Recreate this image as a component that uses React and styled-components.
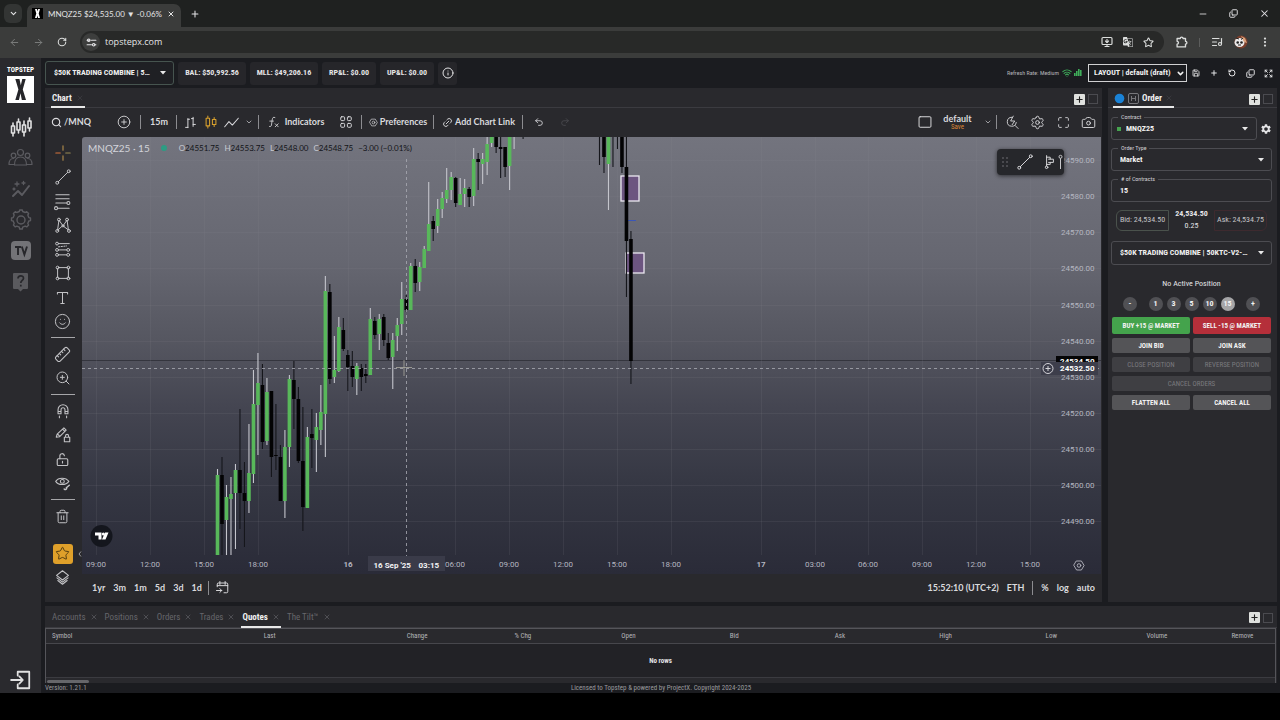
import React from "react";
import styled, { createGlobalStyle, css } from "styled-components";
import {
  ArrowLeft, ArrowRight, ChevronDown, EllipsisVertical, Info, ListMusic,
  Minus, MonitorDown, Plus, RotateCw, Star, X, Settings, Search,
  Camera, Maximize, Undo2, Redo2, Save, Expand, Trash2, Ruler, Smile,
  RotateCcw, Copy, Wifi, ZoomIn, Link2, CirclePlus,
} from "lucide-react";
import { MdSettings, MdOutlineGTranslate } from "react-icons/md";

const narrow = `"Roboto Condensed", "Liberation Sans Narrow", Roboto, sans-serif`;
const human = `Lato, "Open Sans", sans-serif`;

const Global = createGlobalStyle`
  * { box-sizing: border-box; }
  body { margin: 0; background: #000; }
  button, select, input { font: inherit; color: inherit; margin: 0; }
  button { background: none; border: 0; padding: 0; cursor: pointer; }
  svg { display: block; flex: none; }
`;

/* ---------- shell ---------- */
const Screen = styled.div`
  min-height: 100vh;
  display: flex;
  flex-direction: column;
  padding-bottom: 27px;
  background: #000;
  color: #e4e4e6;
  font-family: ${narrow};
  font-size: 8px;
  line-height: 12px;
`;
const Page = styled.div`
  flex: 1;
  display: flex;
  min-height: 0;
  background: #1b1c20;
`;
const Turned = styled.span`
  display: block;
  transform: ${(p) => p.$by};
`;

/* ---------- browser chrome ---------- */
const TabStrip = styled.header`
  height: 27px;
  display: flex;
  align-items: center;
  background: #1f2120;
  padding-left: 4px;
  font-family: ${human};
`;
const TabSearch = styled.button`
  width: 18px;
  height: 19px;
  border-radius: 6px;
  background: #333534;
  display: grid;
  place-items: center;
`;
const BrowserTab = styled.div`
  align-self: flex-end;
  height: 23px;
  width: 154px;
  margin-left: 5px;
  padding: 0 6px 4px 5px;
  border-radius: 7px 7px 0 0;
  background: #3b3c3b;
  display: flex;
  align-items: center;
  gap: 5px;
`;
const Favicon = styled.span`
  width: 11px;
  height: 11px;
  background: #000;
  display: grid;
  place-items: center;
`;
const TabTitle = styled.span`
  flex: 1;
  white-space: nowrap;
`;
const WindowButtons = styled.div`
  margin-left: auto;
  display: flex;
  align-items: center;
`;
const WinButton = styled.button`
  width: ${(p) => p.$w || 31}px;
  height: 26px;
  display: grid;
  place-items: center;
`;
const AddressBar = styled.div`
  height: 31px;
  display: flex;
  align-items: center;
  background: #3b3c3b;
  padding: 0 2px 1px;
  font-family: "Open Sans", sans-serif;
  font-size: 9px;
`;
const NavButton = styled.button`
  width: ${(p) => p.$w || 24}px;
  height: 24px;
  display: grid;
  place-items: center;
  color: ${(p) => (p.$dim ? "#7e807f" : "#dcdedd")};
`;
const ChromeRule = styled.span`
  width: 1px;
  height: 9px;
  margin: 0 4px;
  background: #5c5d5c;
`;
const UrlPill = styled.div`
  flex: 1;
  height: 22px;
  margin: 0 5px 0 6px;
  border-radius: 11px;
  background: #282928;
  display: flex;
  align-items: center;
  padding: 0 5px 0 2px;
`;
const SiteInfo = styled.button`
  width: 18px;
  height: 18px;
  border-radius: 50%;
  background: #3d3e3d;
  display: grid;
  place-items: center;
`;
const UrlInput = styled.input`
  flex: 1;
  min-width: 0;
  background: none;
  border: 0;
  outline: 0;
  padding: 0 5px;
`;

/* ---------- side navigation ---------- */
const SideNav = styled.nav`
  width: 41px;
  background: #2a2a2e;
  display: flex;
  flex-direction: column;
  align-items: center;
  padding: 7px 0 0;
`;
const Brand = styled.div`
  width: 27px;
  height: 46px;
  display: flex;
  flex-direction: column;
  align-items: center;
  font-weight: 700;
  font-size: 7px;
  line-height: 11px;
  color: #fff;
`;
const SideButton = styled.button`
  width: 41px;
  height: ${(p) => (p.$last ? 27 : 31)}px;
  display: grid;
  place-items: center;
  color: ${(p) => (p.$on ? "#e2e2e2" : "#5b5b60")};
  margin-top: ${(p) => (p.$last ? "auto" : "0")};
`;

/* ---------- workspace ---------- */
const Workspace = styled.main`
  flex: 1;
  min-width: 0;
  display: flex;
  flex-direction: column;
  padding: 0 3px 0 4px;
`;
const TopBar = styled.div`
  height: 30px;
  display: flex;
  align-items: center;
  gap: 4px;
`;
const Stat = styled.div`
  height: 23px;
  min-width: ${(p) => p.$w}px;
  display: grid;
  place-items: center;
  border-radius: 3px;
  background: #26262a;
  font-weight: 700;
  white-space: nowrap;
`;
const InfoButton = styled.button`
  width: 19px;
  height: 23px;
  border-radius: 3px;
  background: #26262a;
  display: grid;
  place-items: center;
`;
const SelectBox = styled.label`
  position: relative;
  display: flex;
  align-items: center;
  height: ${(p) => p.$h || 24}px;
  width: ${(p) => p.$w || "auto"};
  flex: ${(p) => (p.$grow ? 1 : "none")};
  border: 1px solid ${(p) => p.$line || "#4c4c51"};
  border-radius: ${(p) => (p.$square ? 0 : 3)}px;
  background: ${(p) => p.$bg || "transparent"};
  color: #f0f0f0;
`;
const NativeSelect = styled.select`
  appearance: none;
  width: 100%;
  height: 100%;
  border: 0;
  outline: 0;
  background: transparent;
  padding: 0 10px 0 ${(p) => p.$pad || 8}px;
  font-weight: 700;
  text-overflow: ellipsis;
  option { color: #000; }
`;
const Arrow = styled.svg`
  position: absolute;
  right: ${(p) => p.$r || 6}px;
  pointer-events: none;
`;
const TopTools = styled.div`
  margin-left: auto;
  display: flex;
  align-items: center;
`;
const RefreshRate = styled.span`
  font-size: 6px;
  color: #b5b5b8;
  margin-right: 3px;
  white-space: nowrap;
`;
const Signals = styled.span`
  display: flex;
  gap: 2px;
  margin-right: 6px;
  color: #3fae5a;
`;
const TopIcon = styled.button`
  width: 18px;
  height: 22px;
  display: grid;
  place-items: center;
`;
const Middle = styled.div`
  flex: 1;
  min-height: 0;
  display: flex;
  gap: 6px;
`;
const Panel = styled.section`
  background: #29292d;
  display: flex;
  flex-direction: column;
  min-width: 0;
  min-height: 0;
  flex: ${(p) => (p.$grow ? "1 1 0" : "none")};
  width: ${(p) => p.$w || "auto"};
`;
const TabRow = styled.div`
  height: ${(p) => p.$h || 20}px;
  flex: none;
  display: flex;
  align-items: stretch;
  padding: 0 4px 0 ${(p) => p.$pad || 6}px;
  gap: 5px;
  border-bottom: 1px solid #3b3b40;
`;
const PanelTab = styled.button`
  display: flex;
  align-items: center;
  gap: ${(p) => p.$gap || 4}px;
  padding: 2px 1px 0;
  font-size: 9px;
  font-weight: ${(p) => (p.$on ? 700 : 400)};
  color: ${(p) => (p.$on ? "#f0f0f0" : "#66666b")};
  border-bottom: 2px solid ${(p) => (p.$on ? "#e8e8e8" : "transparent")};
  margin-bottom: -1px;
  white-space: nowrap;
`;
const TabTools = styled.div`
  margin-left: auto;
  padding-top: 3px;
  display: flex;
  align-items: center;
  gap: 3px;
`;
const AddPanel = styled.button`
  width: 11px;
  height: 11px;
  border-radius: 1px;
  background: #dfe1de;
  color: #222;
  display: grid;
  place-items: center;
`;
const PinPanel = styled.button`
  width: 10px;
  height: 10px;
  border: 1px solid #4b4b50;
`;

/* ---------- chart ---------- */
const ChartToolbar = styled.div`
  height: 29px;
  flex: none;
  display: flex;
  align-items: center;
  font-family: ${human};
  font-weight: 700;
  font-size: 9px;
  color: #dadadd;
  padding: 0 1px 1px 0;
`;
const ToolCell = styled.button`
  width: ${(p) => p.$w}px;
  height: 26px;
  display: flex;
  align-items: center;
  justify-content: ${(p) => (p.$start ? "flex-start" : "center")};
  padding-left: ${(p) => (p.$start ? 6 : 0)}px;
  gap: ${(p) => p.$gap || 2}px;
  white-space: nowrap;
  color: ${(p) => p.$color || "#dadadd"};
`;
const Divider = styled.span`
  width: 1px;
  height: 14px;
  margin: 0 2px 0 1px;
  background: #8c8c90;
`;
const Spacer = styled.span`
  flex: 1;
`;
const LayoutName = styled.span`
  display: flex;
  flex-direction: column;
  align-items: center;
  line-height: 9px;
  small {
    font-family: ${narrow};
    font-size: 7px;
    line-height: 8px;
    font-weight: 400;
    color: #d98736;
  }
`;
const ChartBody = styled.div`
  flex: 1;
  min-height: 0;
  display: flex;
`;
const DrawBar = styled.div`
  width: 37px;
  display: flex;
  flex-direction: column;
  align-items: center;
  padding: 4px 2px 12px 0;
  color: #c3c3c6;
`;
const DrawTool = styled.button`
  width: 35px;
  height: 24px;
  display: grid;
  place-items: center;
`;
const DrawRule = styled.span`
  width: 24px;
  height: 1px;
  margin: 4px 0;
  background: #a6a6a9;
`;
const FavoriteRow = styled.div`
  width: 35px;
  margin: auto 0 2px;
  display: grid;
  place-items: center;
  position: relative;
`;
const FavoriteTool = styled.button`
  width: 20px;
  height: 20px;
  border-radius: 3px;
  background: #dfa02a;
  color: #4c3710;
  display: grid;
  place-items: center;
`;
const CollapseHandle = styled.button`
  position: absolute;
  right: -2px;
  top: 7px;
  color: #9a9a9e;
`;
const ChartColumn = styled.div`
  flex: 1;
  min-width: 0;
  display: flex;
  flex-direction: column;
`;
const Plot = styled.div`
  position: relative;
  flex: 1;
  min-height: 436px;
  margin-right: 1px;
  border-radius: 3px 0 0 0;
  background: linear-gradient(#73747e 0%, #666771 28%, #555660 47%, #444551 62%, #353743 80%, #2a2b38 100%);
  overflow: hidden;
`;
const PlotSvg = styled.svg`
  position: absolute;
  inset: 0;
  width: 100%;
  height: 100%;
  font-family: Roboto, sans-serif;
`;
const Legend = styled.div`
  position: absolute;
  left: 6px;
  top: 5px;
  display: flex;
  align-items: center;
  font-family: ${human};
  font-size: 8px;
  color: #121318;
  gap: 5px;
  b { color: #c9cad2; font-weight: 400; }
`;
const LegendSymbol = styled.span`
  font-size: 10px;
  color: #d2d3da;
  margin-right: 6px;
`;
const LiveDot = styled.span`
  width: 6px;
  height: 6px;
  border-radius: 50%;
  background: #2d9c83;
  margin-right: 7px;
`;
const FloatingTools = styled.div`
  position: absolute;
  right: 37px;
  top: 12px;
  width: 67px;
  height: 26px;
  border-radius: 4px;
  background: #26272b;
  box-shadow: 0 1px 4px rgba(0, 0, 0, 0.6);
  color: #c8c8cb;
  display: flex;
  align-items: center;
  padding-left: 5px;
  gap: 3px;
`;
const RangeBar = styled.div`
  height: 28px;
  flex: none;
  display: flex;
  align-items: center;
  padding: 0 7px 0 10px;
  gap: 8px;
  font-family: ${human};
  font-weight: 700;
  font-size: 9px;
  color: #dadadd;
  ${Divider} { margin: 0; }
  ${Divider}:first-of-type { margin: 0 -2px; }
`;

/* ---------- order ticket ---------- */
const Ticket = styled.form`
  display: flex;
  flex-direction: column;
  padding: 9px 5px 0 3px;
`;
const FieldRow = styled.div`
  display: flex;
  align-items: center;
  gap: 3px;
  margin-bottom: ${(p) => (p.$last ? 5 : 8)}px;
`;
const FieldLabel = styled.span`
  position: absolute;
  left: 6px;
  top: -6px;
  padding: 0 3px;
  background: #29292d;
  font-size: 6px;
  line-height: 9px;
  color: #d0d0d3;
`;
const Square = styled.span`
  position: absolute;
  left: 5px;
  width: 4px;
  height: 4px;
  background: #46a34f;
`;
const QtyInput = styled.input`
  width: 100%;
  height: 100%;
  border: 0;
  outline: 0;
  background: transparent;
  padding: 0 8px;
  font-weight: 700;
`;
const Prices = styled.div`
  display: flex;
  justify-content: space-between;
  align-items: center;
  height: 26px;
  margin: 0 5px 8px;
  text-align: center;
`;
const PriceBox = styled.div`
  width: 53px;
  height: 21px;
  border: 1px solid ${(p) => (p.$ask ? "#3e2a2f" : "#4a524c")};
  border-radius: ${(p) => (p.$ask ? "0 6px 6px 0" : "6px 0 0 6px")};
  display: grid;
  place-items: center;
  white-space: nowrap;
  color: #c4c4c7;
`;
const Position = styled.p`
  margin: 13px 0 7px;
  text-align: center;
`;
const Sizes = styled.div`
  display: flex;
  align-items: center;
  justify-content: space-between;
  padding: 0 12px;
  margin-bottom: 6px;
`;
const SizeGroup = styled.div`
  display: flex;
  gap: 4px;
`;
const SizeButton = styled.button`
  width: 14px;
  height: 14px;
  border-radius: 50%;
  background: ${(p) => (p.$on ? "#a5a5a7" : "#505054")};
  color: #f2f2f2;
  font-weight: 700;
  line-height: 14px;
`;
const ButtonGrid = styled.div`
  display: grid;
  grid-template-columns: 1fr 1fr;
  gap: 4px 3px;
  padding: 0 1px;
`;
const OrderButton = styled.button`
  height: 15px;
  border-radius: 2px;
  background: #545457;
  color: #f2f2f2;
  font-size: 7px;
  font-weight: 700;
  white-space: nowrap;
  ${(p) => p.$wide && css`grid-column: 1 / -1;`}
  ${(p) => p.$side && css`height: 17px; background: ${p.$side === "buy" ? "#44a34c" : "#b52f3a"};`}
  &:disabled { background: #3f3f43; color: #7a7a7e; font-weight: 400; }
`;

/* ---------- quotes ---------- */
const Bottom = styled(Panel)`
  margin-top: 4px;
`;
const TableBox = styled.div`
  border: 1px solid #55555a;
  border-bottom: 0;
  margin-right: 1px;
`;
const QuoteTable = styled.table`
  width: 100%;
  table-layout: fixed;
  border-collapse: collapse;
  font-size: 7px;
  th {
    height: 15px;
    padding: 0;
    font-weight: 400;
    color: #b4b4b8;
    border-bottom: 1px solid #47474c;
    text-align: center;
  }
  th:first-child { text-align: left; padding-left: 6px; }
  td {
    height: 34px;
    padding: 0;
    text-align: center;
    font-weight: 700;
    background: #222226;
    border-bottom: 1px solid #3b3b40;
  }
`;
const ScrollTrack = styled.div`
  height: 5px;
  padding: 2px 0 0 1px;
`;
const ScrollThumb = styled.div`
  width: 42px;
  height: 3px;
  border-radius: 2px;
  background: #66666a;
`;
const Footer = styled.footer`
  height: 10px;
  display: grid;
  grid-template-columns: 1fr auto 1fr;
  align-items: center;
  font-size: 7px;
  line-height: 10px;
  color: #9a9a9e;
`;

/* ---------- small drawings ---------- */
const Caret = ({ r }) => (
  <Arrow $r={r} width="6" height="4" viewBox="0 0 6 4"><path d="M0 0h6L3 3.4z" fill="#e8e8e8" /></Arrow>
);
const Glyph = ({ s = 16, w = 1.1, children, v = 20 }) => (
  <svg width={s} height={s} viewBox={`0 0 ${v} ${v}`} fill="none" stroke="currentColor" strokeWidth={w} strokeLinecap="round" strokeLinejoin="round">{children}</svg>
);
const Dot = ({ x, y, r = 1.6 }) => <circle cx={x} cy={y} r={r} />;

const CrossIcon = () => (
  <Glyph s={18} w={1.2}>
    <path d="M10 2v5M10 13v5" stroke="#b7914c" /><path d="M2 10h5" stroke="#d8743c" /><path d="M13 10h5" stroke="#9a8c55" />
  </Glyph>
);
const TrendIcon = () => <Glyph s={18}><Dot x={3.6} y={16.4} /><Dot x={16.4} y={3.6} /><path d="M4.8 15.2L15.2 4.8" /></Glyph>;
const FibIcon = () => (
  <Glyph s={19}><path d="M3 3h14M3 7h14M3 11.5h11.6M5 17h12" /><Dot x={16.2} y={11.5} /><Dot x={3.2} y={17} /></Glyph>
);
const PatternIcon = () => (
  <Glyph s={18}><path d="M4 15.5L5.5 4.5L10 11L14.5 4.5L16 15.5L10 11z" /><Dot x={5.5} y={4} /><Dot x={14.5} y={4} /><Dot x={3.6} y={16.6} /><Dot x={16.6} y={16.6} /><Dot x={10} y={11} r={1.2} /></Glyph>
);
const ForecastIcon = () => (
  <Glyph s={18}><path d="M5 4h12M5 11h9M5 16.5h9" /><path d="M5 7.6l9-1" strokeDasharray="1.4 1.6" /><Dot x={3.4} y={4} /><Dot x={3.4} y={11} /><Dot x={3.4} y={16.5} /><Dot x={15.8} y={11} /><Dot x={15.8} y={16.5} /></Glyph>
);
const RectIcon = () => (
  <Glyph s={18}><path d="M5 4h10M5 16h10M4 5v10M16 5v10" /><Dot x={4} y={4} /><Dot x={16} y={4} /><Dot x={4} y={16} /><Dot x={16} y={16} /></Glyph>
);
const TextIcon = () => <Glyph s={17} w={1.2}><path d="M4 6V4h12v2M10 4v13M8 17h4" /></Glyph>;
const BarsIcon = () => <Glyph s={13} w={1.5}><path d="M6 4v14M2.500 17.500H6M6 5h2.500M14 2v14M11.500 4H14M14 13h3.500" /></Glyph>;
const CandlesIcon = () => <Glyph s={14} w={1.5}><path d="M5.500 1.500v3M5.500 15.500v3M3 4.500h5v11H3zM14.500 3.500v3M14.500 13.500v3M12 6.500h5v7h-5z" /></Glyph>;
const LineIcon = () => <Glyph s={17} w={1.2}><path d="M2 15l5-6 4 4 7-8" /></Glyph>;
const FxIcon = () => <Glyph s={12} w={1.4}><path d="M11.500 2.500c-3-1.500-4 .500-4.500 4L5.800 15c-.4 2.500-1.800 3-3.300 2.500M3 8.500h6M12 13l5 5M17 13l-5 5" /></Glyph>;
const GridIcon = () => (
  <Glyph s={14} w={1.4}><rect x="2.500" y="2.500" width="5.500" height="5.500" rx="1.300" /><rect x="12" y="2.500" width="5.500" height="5.500" rx="1.300" /><rect x="2.500" y="12" width="5.500" height="5.500" rx="1.300" /><rect x="12" y="12" width="5.500" height="5.500" rx="1.300" /></Glyph>
);
const QuickSearchIcon = () => (
  <Glyph s={15} w={1.2}><path d="M9 3a6 6 0 1 0 6 7M13.500 14l4 4M11 1.500L7.500 8H13L9.500 13" /></Glyph>
);
const HexIcon = ({ s = 12 }) => <Glyph s={s} w={1.5}><path d="M6 2.500h8l4.500 7.500-4.500 7.500H6L1.500 10z" /><circle cx="10" cy="10" r="3" /></Glyph>;
const GotoIcon = () => <Glyph s={15} w={1.3}><path d="M3 9V5.500A1.500 1.500 0 0 1 4.500 4h11A1.500 1.500 0 0 1 17 5.500v10a1.500 1.500 0 0 1-1.500 1.500H12M3 7.500h14M6.500 2v4M13.500 2v4M2 14h7M6.500 11.500L9 14l-2.500 2.500" /></Glyph>;
const FlagIcon = () => <Glyph s={16} w={1.2}><path d="M7 2v13M7 4h4.500v2.500h4v4h-4V13H7M9.500 6.500h2M9.500 10.500h2" /><Dot x={7} y={16.6} /></Glyph>;
const PinLineIcon = () => <svg width="5" height="16" viewBox="0 0 5 16" fill="none" stroke="currentColor"><circle cx="2.500" cy="2.800" r="1.500" /><path d="M2.500 4.300V15" /></svg>;
const TuneIcon = () => <Glyph s={11} w={2}><path d="M2 6h5M15 14h3" /><circle cx="5" cy="6" r="2.300" /><path d="M10 6h8M2 14h8" /><circle cx="14" cy="14" r="2.300" /></Glyph>;

const SideCandles = () => (
  <Glyph s={22} w={1.6} v={22}><path d="M3 7v3M3 17v3M1.500 10h3v7h-3zM8.500 3v3M8.500 14v3M7 6h3v8H7zM14 5v4M14 16v4M12.500 9h3v7h-3zM19.500 2v3M19.500 12v3M18 5h3v7h-3z" /></Glyph>
);
const PeopleIcon = () => (
  <Glyph s={25} w={1.2} v={25}><circle cx="12.500" cy="7.500" r="3" /><circle cx="5.500" cy="10.500" r="2.300" /><circle cx="19.500" cy="10.500" r="2.300" /><path d="M6.500 20c0-5 2-8 6-8s6 3 6 8zM1 19.500c0-4 1.500-6 4.500-6M24 19.500c0-4-1.500-6-4.500-6M1 19.500h5M19 19.500h5" /></Glyph>
);
const SparkIcon = () => (
  <Glyph s={20} w={2}><path d="M2 17l5-5 4 4 7-9" /><path d="M4 5h4M6 3v4M11 4h3M12.500 2.500v3M2 10h2M3 9v2" strokeWidth="1.300" /></Glyph>
);
const ExitIcon = () => <Glyph s={22} w={1.6}><path d="M7 6V2.500h10.500v15H7V14M1 10h10.500M8.500 6.800L11.700 10l-3.200 3.200" /></Glyph>;

/* ---------- market data: [slot, high, body top, body bottom, low, up?] in canvas pixels ---------- */
const CANDLES = [
  [0, 469, 475, 555, 555, 1], [1, 457, 475, 524, 555, 0], [2, 485, 497, 520, 555, 1], [3, 477, 494, 499, 555, 1],
  [4, 464, 470, 493, 549, 1], [5, 409, 470, 493, 529, 0], [6, 462, 493, 501, 547, 0], [7, 424, 473, 501, 513, 1],
  [8, 370, 404, 474, 483, 1], [9, 353, 383, 405, 455, 1], [10, 364, 385, 442, 449, 0], [11, 378, 392, 441, 445, 1],
  [12, 391, 391, 457, 477, 0], [13, 404, 455, 456, 470, 0], [14, 445, 457, 501, 501, 0], [15, 430, 447, 501, 518, 1],
  [16, 375, 379, 447, 467, 1], [17, 361, 380, 399, 429, 0], [18, 387, 399, 461, 463, 0], [19, 407, 461, 507, 531, 0],
  [20, 427, 437, 508, 508, 1], [21, 409, 434, 438, 468, 0], [22, 413, 427, 440, 472, 1], [23, 385, 412, 430, 445, 1],
  [24, 276, 291, 414, 457, 1], [25, 284, 292, 379, 384, 0], [26, 336, 370, 377, 383, 1], [27, 317, 327, 371, 372, 1],
  [28, 318, 330, 349, 351, 0], [29, 350, 355, 367, 391, 0], [30, 351, 366, 377, 387, 0], [31, 363, 366, 379, 395, 1],
  [32, 364, 368, 377, 391, 0], [33, 364, 374, 376, 383, 0], [34, 308, 319, 375, 375, 1], [35, 317, 321, 335, 339, 0],
  [36, 314, 319, 334, 350, 1], [37, 314, 317, 340, 346, 0], [38, 333, 343, 358, 360, 0], [39, 333, 340, 357, 389, 1],
  [40, 318, 325, 336, 351, 1], [41, 282, 299, 324, 335, 1], [42, 295, 299, 310, 312, 0], [43, 263, 266, 310, 310, 1],
  [44, 259, 266, 283, 292, 0], [45, 262, 267, 282, 291, 1], [46, 246, 249, 268, 268, 1], [47, 182, 224, 251, 251, 1],
  [48, 216, 221, 229, 241, 0], [49, 199, 209, 226, 233, 1], [50, 192, 198, 209, 218, 1], [51, 168, 190, 199, 203, 1],
  [52, 172, 177, 190, 200, 1], [53, 177, 178, 203, 207, 0], [54, 178, 194, 205, 205, 1], [55, 179, 188, 194, 207, 1],
  [56, 187, 189, 197, 207, 0], [57, 148, 159, 196, 206, 1], [58, 153, 159, 162, 190, 0], [59, 153, 159, 164, 184, 1],
  [60, 137, 144, 162, 175, 1], [61, 137, 137, 143, 147, 1], [62, 137, 137, 147, 153, 0], [63, 137, 147, 149, 178, 0],
  [64, 147, 147, 167, 177, 0], [65, 137, 137, 166, 190, 1], [66, 137, 137, 137, 149, 1], [68, 137, 137, 137, 139, 0],
  [85, 137, 137, 137, 165, 0], [86, 137, 137, 157, 173, 0], [87, 137, 137, 164, 210, 1], [88, 137, 137, 137, 167, 0],
  [89, 137, 137, 137, 149, 0], [90, 137, 137, 167, 173, 0], [91, 137, 167, 241, 297, 0], [92, 231, 239, 361, 384, 0],
];
const slotX = (i) => 217.5 + i * 4.494;
const PRICES = [[160, "24590.00"], [196, "24580.00"], [232, "24570.00"], [268, "24560.00"], [305, "24550.00"], [341, "24540.00"], [377, "24530.00"], [413, "24520.00"], [449, "24510.00"], [485, "24500.00"], [521, "24490.00"]];
const TIMES = [[96, "09:00"], [150, "12:00"], [204, "15:00"], [258, "18:00"], [348, "16"], [455, "06:00"], [509, "09:00"], [563, "12:00"], [617, "15:00"], [671, "18:00"], [761, "17"], [815, "03:00"], [868, "06:00"], [922, "09:00"], [976, "12:00"], [1030, "15:00"]];

const Chart = () => (
  <Plot>
    <PlotSvg role="img" aria-label="MNQZ25 15 minute candles">
      {PRICES.map(([y]) => <line key={y} x1="0" x2="100%" y1={y - 136.5} y2={y - 136.5} stroke="#8a8b96" strokeOpacity="0.13" />)}
      <line x1="0" x2="100%" y1="223.500" y2="223.500" stroke="#22232a" strokeOpacity="0.6" />
      <g transform="translate(-82 -137)">
        {TIMES.map(([x]) => <line key={x} x1={x + 0.5} x2={x + 0.5} y1="137" y2="555" stroke="#8a8b96" strokeOpacity="0.13" />)}
        {[[621, 176, 18, 25], [626, 253, 18, 20]].map(([x, y, w, h]) => (
          <rect key={y} x={x} y={y} width={w} height={h} fill="#6c5580" stroke="#ece8f0" strokeWidth="1.300" />
        ))}
        <path d="M628 220.500h8" stroke="#3b56b8" />
        {CANDLES.map(([i, hi, top, bot, lo, up]) => (
          <g key={i}>
            <line x1={slotX(i)} x2={slotX(i)} y1={hi} y2={lo} stroke={up ? "#c4c5cc" : "#15161b"} strokeWidth="1.100" />
            {bot > top && <rect x={slotX(i) - 1.8} y={top} width="3.600" height={bot - top} fill={up ? "#58b85a" : "#030304"} />}
          </g>
        ))}
        <line x1="406.500" x2="406.500" y1="159" y2="557" stroke="#a9aab3" strokeDasharray="3 3" strokeOpacity="0.8" />
        <path d="M404 360v16M396 367.500h16" stroke="#aaa99f" strokeOpacity="0.8" />
      </g>
      <line x1="0" x2="100%" y1="231.500" y2="231.500" stroke="#a9aab3" strokeDasharray="3 3" strokeOpacity="0.8" />
      <g transform="translate(-82 -137)" fontSize="8">
        <rect x="368" y="556" width="77" height="15" fill="#3a3b49" />
        <g textAnchor="middle" fill="#b5b6c0">
          {TIMES.map(([x, t]) => <text key={x} x={x} y="567" fontWeight={t.length === 2 ? 700 : 400}>{t}</text>)}
        </g>
        <text x="373.500" y="568" fontWeight="700" fill="#f2f2f4">16 Sep '25</text>
        <text x="418.500" y="568" fontWeight="700" fill="#f2f2f4">03:15</text>
        <circle cx="101.500" cy="536" r="11" fill="#14161d" />
        <path d="M95 532.500h6.500v7h-3v-4H95zM108.500 532.500l-3 7H102l3-7z" fill="#fff" /><circle cx="103.300" cy="534" r="1.500" fill="#fff" />
      </g>
      <svg x="100%" overflow="visible" fontSize="8">
        <g transform="translate(-1101 -137)">
          <g textAnchor="end" fill="#b5b6c0">{PRICES.map(([y, t]) => <text key={y} x="1094.500" y={y + 3}>{t}</text>)}</g>
          <rect x="1056" y="356" width="42" height="10" fill="#050506" />
          <text x="1094.500" y="364" textAnchor="end" fontWeight="700" fill="#fff">24534.50</text>
          <rect x="1041" y="362" width="57" height="13" fill="#3d3e4b" />
          <text x="1094.500" y="371" textAnchor="end" fontWeight="700" fill="#fff">24532.50</text>
          <circle cx="1048" cy="368.500" r="5" fill="none" stroke="#d4d4d8" /><path d="M1045.500 368.500h5M1048 366v5" stroke="#d4d4d8" />
          <g transform="translate(1073 559.500)" color="#b5b6c0"><HexIcon /></g>
        </g>
      </svg>
    </PlotSvg>
    <Legend>
      <LegendSymbol>MNQZ25 · 15</LegendSymbol>
      <LiveDot />
      <span><b>O</b>24551.75</span><span><b>H</b>24553.75</span><span><b>L</b>24548.00</span><span><b>C</b>24548.75</span><span>−3.00 (−0.01%)</span>
    </Legend>
    <FloatingTools>
      <svg width="6" height="10" viewBox="0 0 6 10" fill="#77777b">{[1, 5, 9].map((y) => [1, 5].map((x) => <circle key={x + "-" + y} cx={x} cy={y} r="0.800" />))}</svg>
      <ToolCell type="button" aria-label="Trend line" $w={28}><TrendIcon /></ToolCell>
      <ToolCell type="button" aria-label="Volume profile" $w={13}><FlagIcon /></ToolCell>
      <PinLineIcon />
    </FloatingTools>
  </Plot>
);

const PanelTools = () => (
  <TabTools>
    <AddPanel aria-label="Add tab"><Plus size={9} strokeWidth={3} /></AddPanel>
    <PinPanel aria-label="Maximize" />
  </TabTools>
);
const Close = ({ dim }) => <X size={8} color={dim ? "#3e3e43" : "#5c5c61"} strokeWidth={2.2} />;

const COLS = [["Symbol", "10.5%"], ["Last", "15.4%"], ["Change", "8.6%"], ["% Chg", "8.6%"], ["Open", "8.6%"], ["Bid", "8.6%"], ["Ask", "8.6%"], ["High", "8.6%"], ["Low", "8.6%"], ["Volume", "8.6%"], ["Remove", "5.3%"]];

export default function App() {
  return (
    <Screen>
      <Global />
      <TabStrip>
        <TabSearch aria-label="Search tabs"><ChevronDown size={9} strokeWidth={3} /></TabSearch>
        <BrowserTab>
          <Favicon><svg width="5" height="9" viewBox="0 0 5 9"><path d="M0 0h2l.6 2.600L3.200 0H5L3.700 4.500 5 9H3l-.5-2.600L1.800 9H0l1.300-4.500z" fill="#fff" /></svg></Favicon>
          <TabTitle>MNQZ25 $24,535.00 ▼ -0.06%</TabTitle>
          <X size={8} strokeWidth={3} />
        </BrowserTab>
        <WinButton aria-label="New tab" $w={27}><Plus size={10} strokeWidth={2.5} /></WinButton>
        <WindowButtons>
          <WinButton aria-label="Minimize"><Minus size={10} /></WinButton>
          <WinButton aria-label="Restore"><Turned $by="scaleY(-1)"><Copy size={9} strokeWidth={2.5} /></Turned></WinButton>
          <WinButton aria-label="Close"><X size={11} strokeWidth={2.2} /></WinButton>
        </WindowButtons>
      </TabStrip>
      <AddressBar>
        <NavButton $dim aria-label="Back"><ArrowLeft size={11} /></NavButton>
        <NavButton $dim aria-label="Forward"><ArrowRight size={11} /></NavButton>
        <NavButton aria-label="Reload"><RotateCw size={10} strokeWidth={2.5} /></NavButton>
        <UrlPill>
          <SiteInfo aria-label="Site information"><TuneIcon /></SiteInfo>
          <UrlInput aria-label="Address" defaultValue="topstepx.com" />
          <NavButton aria-label="Install" $w={21}><MonitorDown size={12} strokeWidth={2.3} /></NavButton>
          <NavButton aria-label="Translate" $w={21}><MdOutlineGTranslate size={12} /></NavButton>
          <NavButton aria-label="Bookmark" $w={21}><Star size={11} strokeWidth={2.3} /></NavButton>
        </UrlPill>
        <NavButton aria-label="Extensions" $w={26}>
          <Glyph s={14} w={1.9}><path d="M3 5h4.500a2 2 0 0 1 4 0H15v4a2 2 0 0 1 0 4v4H3v-4a2 2 0 0 0 0-4z" /></Glyph>
        </NavButton>
        <ChromeRule />
        <NavButton aria-label="Media" $w={26}><ListMusic size={12} strokeWidth={2.3} /></NavButton>
        <NavButton aria-label="Profile" $w={22}>
          <svg width="14" height="14" viewBox="0 0 14 14"><circle cx="7" cy="7" r="6.500" fill="#7a3f2c" /><ellipse cx="5.500" cy="7.500" rx="5" ry="4.500" fill="#eceaea" /><path d="M7 1l4 2 2 5-3-1z" fill="#d9a27c" /><circle cx="3.700" cy="7.500" r="1.300" fill="#222" /><circle cx="7.500" cy="7.500" r="1.300" fill="#222" /><path d="M2 3l3 1M9 3L7 4.500M4 10h3" stroke="#222" /></svg>
        </NavButton>
        <NavButton aria-label="Menu" $w={26}><EllipsisVertical size={12} strokeWidth={2.5} /></NavButton>
      </AddressBar>

      <Page>
        <SideNav aria-label="Main">
          <Brand>
            <span>TOPSTEP</span>
            <svg width="27" height="27" viewBox="0 0 26 26"><path fill="#fff" d="M0 0h26v26H0z" /><path d="M8 3h4l1.300 6L14.700 3H18l-2.800 10L18.300 23h-4L13 16.500 11.500 23H8l3-10z" fill="#26262a" /></svg>
          </Brand>
          <SideButton $on aria-label="Trade"><SideCandles /></SideButton>
          <SideButton aria-label="Community"><PeopleIcon /></SideButton>
          <SideButton aria-label="Stats"><SparkIcon /></SideButton>
          <SideButton aria-label="Settings">
            <Glyph s={22} w={1.4} v={22}>
              <circle cx="11" cy="11" r="4" />
              <path d="M9.300 2.500l.4-1.500h2.600l.4 1.500 2.500 1 1.500-.8 1.900 1.900-.8 1.500 1 2.500 1.700.4v2.600l-1.700.4-1 2.500.8 1.500-1.900 1.900-1.500-.8-2.500 1-.4 1.900H9.700l-.4-1.900-2.500-1-1.500.8-1.900-1.900.8-1.500-1-2.500-1.700-.4V9l1.700-.4 1-2.500-.8-1.500 1.900-1.900 1.500.8z" />
            </Glyph>
          </SideButton>
          <SideButton aria-label="TradingView">
            <svg width="20" height="19" viewBox="0 0 20 19"><rect width="20" height="19" rx="4" fill="#737377" /><path d="M4 6h6M7 6v8M10.800 5.500l2.600 8 2.600-8" stroke="#27272b" strokeWidth="1.900" fill="none" /></svg>
          </SideButton>
          <SideButton aria-label="Help">
            <svg width="18" height="20" viewBox="0 0 18 20"><path d="M2 1h13a1 1 0 0 1 1 1v14a1 1 0 0 1-1 1h-4l-2.500 2.500L6 17H2a1 1 0 0 1-1-1V2a1 1 0 0 1 1-1z" fill="#5a5a5e" /><path d="M6 6.500C6 3 11.500 3 11.500 6.300c0 2.200-2.700 2.200-2.700 4.700M8.800 12.800v1.800" stroke="#27272b" strokeWidth="1.700" fill="none" /></svg>
          </SideButton>
          <SideButton $on $last aria-label="Log out"><ExitIcon /></SideButton>
        </SideNav>

        <Workspace>
          <TopBar>
            <SelectBox $w="129px" $h={24} $line="#46544f" $bg="#1f2024">
              <NativeSelect aria-label="Account"><option>$50K TRADING COMBINE | 5…</option></NativeSelect><Caret r={7} />
            </SelectBox>
            <Stat $w={68}>BAL: $50,992.56</Stat>
            <Stat $w={68}>MLL: $49,206.16</Stat>
            <Stat $w={54}>RP&amp;L: $0.00</Stat>
            <Stat $w={54}>UP&amp;L: $0.00</Stat>
            <InfoButton aria-label="Account info"><Info size={12} /></InfoButton>
            <TopTools>
              <RefreshRate>Refresh Rate: Medium</RefreshRate>
              <Signals>
                <Wifi size={10} strokeWidth={2.5} />
                <svg width="8" height="9" viewBox="0 0 8 9"><path d="M0 5h1.600v3H0zM2 3h1.600v5H2zM4 1h1.600v7H4zM6 2h1.600v6H6z" fill="#3fae5a" /></svg>
              </Signals>
              <SelectBox $w="99px" $h={18} $square $line="#d0d0d2">
                <NativeSelect $pad={5} aria-label="Layout"><option>LAYOUT | default (draft)</option></NativeSelect>
                <Arrow as={ChevronDown} size={9} strokeWidth={4} $r={1} />
              </SelectBox>
              <TopIcon aria-label="Save layout"><Save size={8} strokeWidth={2.5} /></TopIcon>
              <TopIcon aria-label="Add layout"><Plus size={8} strokeWidth={3} /></TopIcon>
              <TopIcon aria-label="Reset layout"><RotateCcw size={8} strokeWidth={3} /></TopIcon>
              <TopIcon aria-label="Pop out"><Turned $by="scaleY(-1)"><Copy size={9} strokeWidth={2.5} /></Turned></TopIcon>
              <TopIcon aria-label="Fullscreen"><Expand size={9} strokeWidth={2.5} /></TopIcon>
            </TopTools>
          </TopBar>

          <Middle>
            <Panel $grow>
              <TabRow>
                <PanelTab $on>Chart<Close dim /></PanelTab>
                <PanelTools />
              </TabRow>
              <ChartToolbar>
                <ToolCell $w={64} $start><Search size={11} strokeWidth={2.5} />/MNQ</ToolCell>
                <ToolCell $w={30} aria-label="Compare"><CirclePlus size={14} strokeWidth={1.5} /></ToolCell>
                <Divider />
                <ToolCell $w={32}>15m</ToolCell>
                <Divider />
                <ToolCell $w={22} aria-label="Bars"><BarsIcon /></ToolCell>
                <ToolCell $w={20} $color="#d8a02d" aria-label="Candles"><CandlesIcon /></ToolCell>
                <ToolCell $w={20} aria-label="Line"><LineIcon /></ToolCell>
                <ToolCell $w={16} aria-label="More chart types"><ChevronDown size={8} /></ToolCell>
                <Divider />
                <ToolCell $w={70} $gap={5}><FxIcon />Indicators</ToolCell>
                <ToolCell $w={29} aria-label="Templates"><GridIcon /></ToolCell>
                <Divider />
                <ToolCell $w={68}><HexIcon s={9} />Preferences</ToolCell>
                <Divider />
                <ToolCell $w={85}><Turned $by="rotate(-45deg)"><Link2 size={11} /></Turned>Add Chart Link</ToolCell>
                <Divider />
                <ToolCell $w={28} aria-label="Undo"><Undo2 size={10} /></ToolCell>
                <ToolCell $w={24} $color="#4a4a4f" aria-label="Redo"><Redo2 size={10} /></ToolCell>
                <Spacer />
                <ToolCell $w={20} aria-label="Layout setup"><Glyph s={14} w={1.4}><rect x="1.500" y="2.500" width="17" height="15" rx="1.500" /></Glyph></ToolCell>
                <ToolCell $w={45}><LayoutName>default<small>Save</small></LayoutName></ToolCell>
                <ToolCell $w={15} aria-label="Layouts"><ChevronDown size={8} /></ToolCell>
                <Divider />
                <ToolCell $w={26} aria-label="Quick search"><QuickSearchIcon /></ToolCell>
                <ToolCell $w={25} aria-label="Chart settings"><Settings size={15} strokeWidth={1.5} /></ToolCell>
                <ToolCell $w={26} aria-label="Fullscreen"><Maximize size={13} strokeWidth={1.6} /></ToolCell>
                <ToolCell $w={25} aria-label="Snapshot"><Camera size={15} strokeWidth={1.5} /></ToolCell>
              </ChartToolbar>
              <ChartBody>
                <DrawBar>
                  <DrawTool aria-label="Cross"><CrossIcon /></DrawTool>
                  <DrawTool aria-label="Trend line"><TrendIcon /></DrawTool>
                  <DrawTool aria-label="Fibonacci"><FibIcon /></DrawTool>
                  <DrawTool aria-label="Patterns"><PatternIcon /></DrawTool>
                  <DrawTool aria-label="Forecasting"><ForecastIcon /></DrawTool>
                  <DrawTool aria-label="Shapes"><RectIcon /></DrawTool>
                  <DrawTool aria-label="Text"><TextIcon /></DrawTool>
                  <DrawTool aria-label="Icons"><Smile size={17} strokeWidth={1.4} /></DrawTool>
                  <DrawRule />
                  <DrawTool aria-label="Measure"><Turned $by="scaleX(-1)"><Ruler size={17} strokeWidth={1.5} /></Turned></DrawTool>
                  <DrawTool aria-label="Zoom in"><ZoomIn size={16} strokeWidth={1.5} /></DrawTool>
                  <DrawRule />
                  <DrawTool aria-label="Magnet"><Glyph s={18} w={1.2}><path d="M4.500 13V8.500a5.500 5.500 0 0 1 11 0V13h-3.300V8.500a2.200 2.200 0 0 0-4.400 0V13zM4.500 10.500h3.300M12.200 10.500h3.300M6 15.500v2M14 15.500v2" /></Glyph></DrawTool>
                  <DrawTool aria-label="Keep drawing"><Glyph s={18} w={1.2}><path d="M2.500 12.500l1-3.500 7.500-7 2.500 2.500L6 12zM9.500 3.500L12 6M4 9l2 2M11.500 12.500h6v5h-6zM12.800 12.500V11a1.700 1.700 0 0 1 3.400 0v1.500" /></Glyph></DrawTool>
                  <DrawTool aria-label="Lock drawings"><Glyph s={15} w={1.5}><rect x="3" y="9" width="14" height="9" rx="1.500" /><path d="M6.500 9V5.500a3 3 0 0 1 6-.500M10 12.500v2" /></Glyph></DrawTool>
                  <DrawTool aria-label="Hide drawings"><Glyph s={17} w={1.2}><path d="M2 7.500C5 2.500 14 2.500 17.500 7.500c-3.500 5-12.500 5-15.500 0z" /><circle cx="9.800" cy="7.500" r="2.300" /><path d="M12 16.500c1.500 1 3 .5 3-1.500M14.500 15l3.500-3" strokeWidth="1.700" /></Glyph></DrawTool>
                  <DrawRule />
                  <DrawTool aria-label="Remove"><Trash2 size={15} strokeWidth={1.6} /></DrawTool>
                  <FavoriteRow>
                    <FavoriteTool aria-label="Favorites"><Star size={15} strokeWidth={1.5} /></FavoriteTool>
                    <CollapseHandle aria-label="Collapse toolbar"><svg width="4" height="6" viewBox="0 0 4 6" fill="none" stroke="currentColor"><path d="M3 .5L1 3l2 2.500" /></svg></CollapseHandle>
                  </FavoriteRow>
                  <DrawTool aria-label="Object tree"><Glyph s={17} w={1.3}><path d="M10 2l7 5.500-7 5.500-7-5.500zM3.500 10.500L10 15.500l6.500-5M4.500 13.500L10 18l5.500-4.500" /></Glyph></DrawTool>
                </DrawBar>
                <ChartColumn>
                  <Chart />
                  <RangeBar>
                    {["1yr", "3m", "1m", "5d", "3d", "1d"].map((t) => <button key={t}>{t}</button>)}
                    <Divider />
                    <button aria-label="Go to date"><GotoIcon /></button>
                    <Spacer />
                    <span>15:52:10 (UTC+2)</span>
                    <button>ETH</button>
                    <Divider />
                    <button>%</button>
                    <button>log</button>
                    <button>auto</button>
                  </RangeBar>
                </ChartColumn>
              </ChartBody>
            </Panel>

            <Panel $w="169px">
              <TabRow $pad={5}>
                <PanelTab $on $gap={3}>
                  <svg width="11" height="11" viewBox="0 0 11 11"><circle cx="5.500" cy="5.500" r="4.800" fill="#1a82d6" /></svg>
                  <svg width="11" height="11" viewBox="0 0 11 11" fill="none" stroke="#77777b"><rect x="0.500" y="0.500" width="10" height="10" rx="1.500" /><path d="M3.500 3v5M7.500 3v5M3.500 5.500h4" /></svg>
                  Order<Close dim />
                </PanelTab>
                <PanelTools />
              </TabRow>
              <Ticket onSubmit={(e) => e.preventDefault()}>
                <FieldRow>
                  <SelectBox $grow $h={23}>
                    <FieldLabel>Contract</FieldLabel><Square />
                    <NativeSelect $pad={14}><option>MNQZ25</option></NativeSelect><Caret r={8} />
                  </SelectBox>
                  <button type="button" aria-label="Contract settings"><MdSettings size={12} /></button>
                </FieldRow>
                <FieldRow>
                  <SelectBox $grow $h={23}>
                    <FieldLabel>Order Type</FieldLabel>
                    <NativeSelect><option>Market</option></NativeSelect><Caret r={7} />
                  </SelectBox>
                </FieldRow>
                <FieldRow $last>
                  <SelectBox $grow $h={23}>
                    <FieldLabel># of Contracts</FieldLabel>
                    <QtyInput defaultValue="15" />
                  </SelectBox>
                </FieldRow>
                <Prices>
                  <PriceBox>Bid: 24,534.50</PriceBox>
                  <div><b>24,534.50</b><br />0.25</div>
                  <PriceBox $ask>Ask: 24,534.75</PriceBox>
                </Prices>
                <SelectBox $h={24}>
                  <NativeSelect aria-label="Trading account"><option>$50K TRADING COMBINE | 50KTC-V2-…</option></NativeSelect><Caret r={7} />
                </SelectBox>
                <Position>No Active Position</Position>
                <Sizes>
                  <SizeButton type="button">-</SizeButton>
                  <SizeGroup>{[1, 3, 5, 10, 15].map((n) => <SizeButton type="button" key={n} $on={n === 15}>{n}</SizeButton>)}</SizeGroup>
                  <SizeButton type="button">+</SizeButton>
                </Sizes>
                <ButtonGrid>
                  <OrderButton type="button" $side="buy">BUY +15 @ MARKET</OrderButton>
                  <OrderButton type="button" $side="sell">SELL -15 @ MARKET</OrderButton>
                  <OrderButton type="button">JOIN BID</OrderButton>
                  <OrderButton type="button">JOIN ASK</OrderButton>
                  <OrderButton type="button" disabled>CLOSE POSITION</OrderButton>
                  <OrderButton type="button" disabled>REVERSE POSITION</OrderButton>
                  <OrderButton type="button" disabled $wide>CANCEL ORDERS</OrderButton>
                  <OrderButton type="button">FLATTEN ALL</OrderButton>
                  <OrderButton type="button">CANCEL ALL</OrderButton>
                </ButtonGrid>
              </Ticket>
            </Panel>
          </Middle>

          <Bottom>
            <TabRow $h={22}>
              {["Accounts", "Positions", "Orders", "Trades", "Quotes", "The Tilt™"].map((t) => (
                <PanelTab key={t} $on={t === "Quotes"}>{t}<Close /></PanelTab>
              ))}
              <PanelTools />
            </TabRow>
            <TableBox>
              <QuoteTable>
                <colgroup>{COLS.map(([n, w]) => <col key={n} width={w} />)}</colgroup>
                <thead><tr>{COLS.map(([n]) => <th key={n}>{n}</th>)}</tr></thead>
                <tbody><tr><td colSpan={11}>No rows</td></tr></tbody>
              </QuoteTable>
              <ScrollTrack><ScrollThumb /></ScrollTrack>
            </TableBox>
          </Bottom>
          <Footer><span>Version: 1.21.1</span><span>Licensed to Topstep &amp; powered by ProjectX. Copyright 2024-2025</span></Footer>
        </Workspace>
      </Page>
    </Screen>
  );
}
